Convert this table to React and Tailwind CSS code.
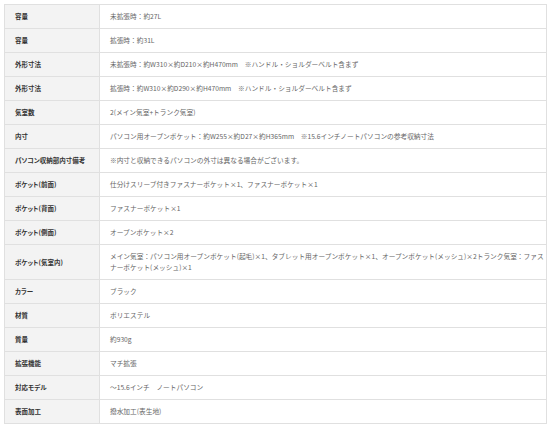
import React from "react";

const specs = [
  { label: "容量", value: "未拡張時：約27L" },
  { label: "容量", value: "拡張時：約31L" },
  {
    label: "外形寸法",
    value: "未拡張時：約W310×約D210×約H470mm　※ハンドル・ショルダーベルト含まず",
  },
  {
    label: "外形寸法",
    value: "拡張時：約W310×約D290×約H470mm　※ハンドル・ショルダーベルト含まず",
  },
  { label: "気室数", value: "2(メイン気室+トランク気室)" },
  {
    label: "内寸",
    value: "パソコン用オープンポケット：約W255×約D27×約H365mm　※15.6インチノートパソコンの参考収納寸法",
  },
  {
    label: "パソコン収納部内寸備考",
    value: "※内寸と収納できるパソコンの外寸は異なる場合がございます。",
  },
  {
    label: "ポケット(前面)",
    value: "仕分けスリーブ付きファスナーポケット×1、ファスナーポケット×1",
  },
  { label: "ポケット(背面)", value: "ファスナーポケット×1" },
  { label: "ポケット(側面)", value: "オープンポケット×2" },
  {
    label: "ポケット(気室内)",
    value:
      "メイン気室：パソコン用オープンポケット(起毛)×1、タブレット用オープンポケット×1、オープンポケット(メッシュ)×2トランク気室：ファスナーポケット(メッシュ)×1",
    tall: true,
  },
  { label: "カラー", value: "ブラック" },
  { label: "材質", value: "ポリエステル" },
  { label: "質量", value: "約930g" },
  { label: "拡張機能", value: "マチ拡張" },
  { label: "対応モデル", value: "～15.6インチ　ノートパソコン" },
  { label: "表面加工", value: "撥水加工(表生地)" },
];

export default function App() {
  return (
    <div
      className="w-[554px] h-[424px] bg-white pt-[4px] pl-[4px]"
      style={{ fontFamily: '"Noto Sans CJK JP", "Noto Sans", sans-serif' }}
    >
      <table className="w-[543px] border-collapse table-fixed">
        <tbody>
          {specs.map((row, i) => (
            <tr key={i} className={row.tall ? "h-[35px]" : "h-[24px]"}>
              <td className="w-[95px] border border-[#e0e0e0] bg-[#f3f3f3] pl-[10px] text-[6.5px] leading-[11px] font-bold text-[#333] align-middle [font-feature-settings:'palt']">
                {row.label}
              </td>
              <td className="border border-[#e0e0e0] pl-[10px] pr-[2px] text-[6.7px] leading-[11px] text-[#666] align-middle break-all">
                {row.value}
              </td>
            </tr>
          ))}
        </tbody>
      </table>
    </div>
  );
}
